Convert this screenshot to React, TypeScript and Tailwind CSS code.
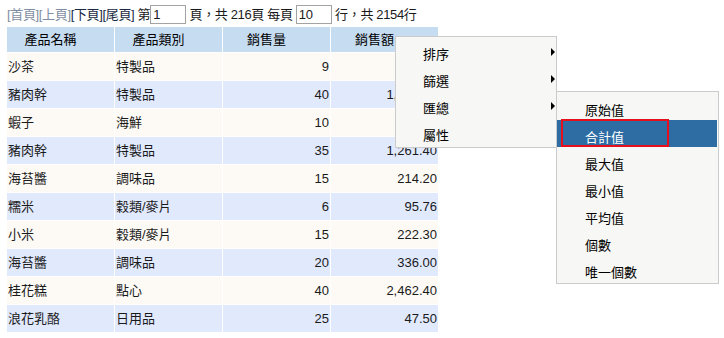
import React from "react";

const rows = [
  ["沙茶", "特製品", "9", "207.00"],
  ["豬肉幹", "特製品", "40", "1,441.60"],
  ["蝦子", "海鮮", "10", "95.00"],
  ["豬肉幹", "特製品", "35", "1,261.40"],
  ["海苔醬", "調味品", "15", "214.20"],
  ["糯米", "穀類/麥片", "6", "95.76"],
  ["小米", "穀類/麥片", "15", "222.30"],
  ["海苔醬", "調味品", "20", "336.00"],
  ["桂花糕", "點心", "40", "2,462.40"],
  ["浪花乳酪", "日用品", "25", "47.50"],
];

const menuItems = ["排序", "篩選", "匯總", "屬性"];
const subItems = ["原始值", "合計值", "最大值", "最小值", "平均值", "個數", "唯一個數"];

function Arrow() {
  return (
    <span className="absolute right-[1px] top-[10px] w-0 h-0 border-y-[4px] border-y-transparent border-l-[4px] border-l-black" />
  );
}

export default function App() {
  return (
    <div
      className="relative w-[724px] h-[338px] bg-white text-[13px] text-[#1a1a1a] overflow-hidden"
      style={{ fontFamily: '"Liberation Sans", "Noto Sans CJK TC", sans-serif' }}
    >
      {/* pager */}
      <div className="flex items-center h-[19px] mt-[5px] ml-[7px] whitespace-pre leading-none tracking-[-0.35px]">
        <span className="text-[#7f8ea3]">[首頁][上頁]</span>
        <span className="text-[#1b2a44]">[下頁][尾頁]</span>
        <span> 第</span>
        <input
          readOnly
          value="1"
          className="w-[36px] h-[19px] border border-[#a3a3a3] px-[2px] text-[13px] outline-none"
        />
        <span> 頁，共 216頁 每頁 </span>
        <input
          readOnly
          value="10"
          className="w-[36px] h-[19px] border border-[#a3a3a3] px-[2px] text-[13px] outline-none"
        />
        <span> 行，共 2154行</span>
      </div>

      {/* table */}
      <div className="mt-[3px] ml-[7px] grid grid-cols-[107px_107px_107px_107px] gap-px w-max bg-white">
        {["產品名稱", "產品類別", "銷售量", "銷售額"].map((h) => (
          <div key={h} className="h-[25px] bg-[#c6dcf1] flex items-center justify-center pr-5 text-black">
            {h}
          </div>
        ))}
        {rows.map((r, i) => {
          const bg = i % 2 === 0 ? "bg-[#fdfaf6]" : "bg-[#e1e9fd]";
          return (
            <React.Fragment key={i}>
              <div className={`h-[27px] ${bg} flex items-center pl-[1px]`}>{r[0]}</div>
              <div className={`h-[27px] ${bg} flex items-center pl-[1px]`}>{r[1]}</div>
              <div className={`h-[27px] ${bg} flex items-center justify-end pr-[1px]`}>{r[2]}</div>
              <div className={`h-[27px] ${bg} flex items-center justify-end pr-[1px]`}>{r[3]}</div>
            </React.Fragment>
          );
        })}
      </div>

      {/* context menu */}
      <div className="absolute left-[395px] top-[36px] w-[162px] border border-[#cbcbcb] bg-[#f7f7f5] py-px">
        {menuItems.map((m, i) => (
          <div key={m} className="relative h-[27px] flex items-center pl-[27px] pt-[7px] text-black">
            {m}
            {i < 3 && <Arrow />}
          </div>
        ))}
      </div>

      {/* sub menu */}
      <div className="absolute left-[556px] top-[91px] w-[163px] border border-[#cbcbcb] bg-[#f7f7f5] py-px">
        {subItems.map((m, i) => (
          <div
            key={m}
            className={`relative h-[27px] flex items-center pl-[28px] pt-[8px] ${
              i === 1 ? "bg-[#2e6da4] text-white mr-px" : "text-black"
            }`}
          >
            {m}
            {i === 1 && (
              <span className="absolute left-[4px] top-[-1px] w-[108px] h-[28px] border-2 border-[#e5101b]" />
            )}
          </div>
        ))}
      </div>
    </div>
  );
}
